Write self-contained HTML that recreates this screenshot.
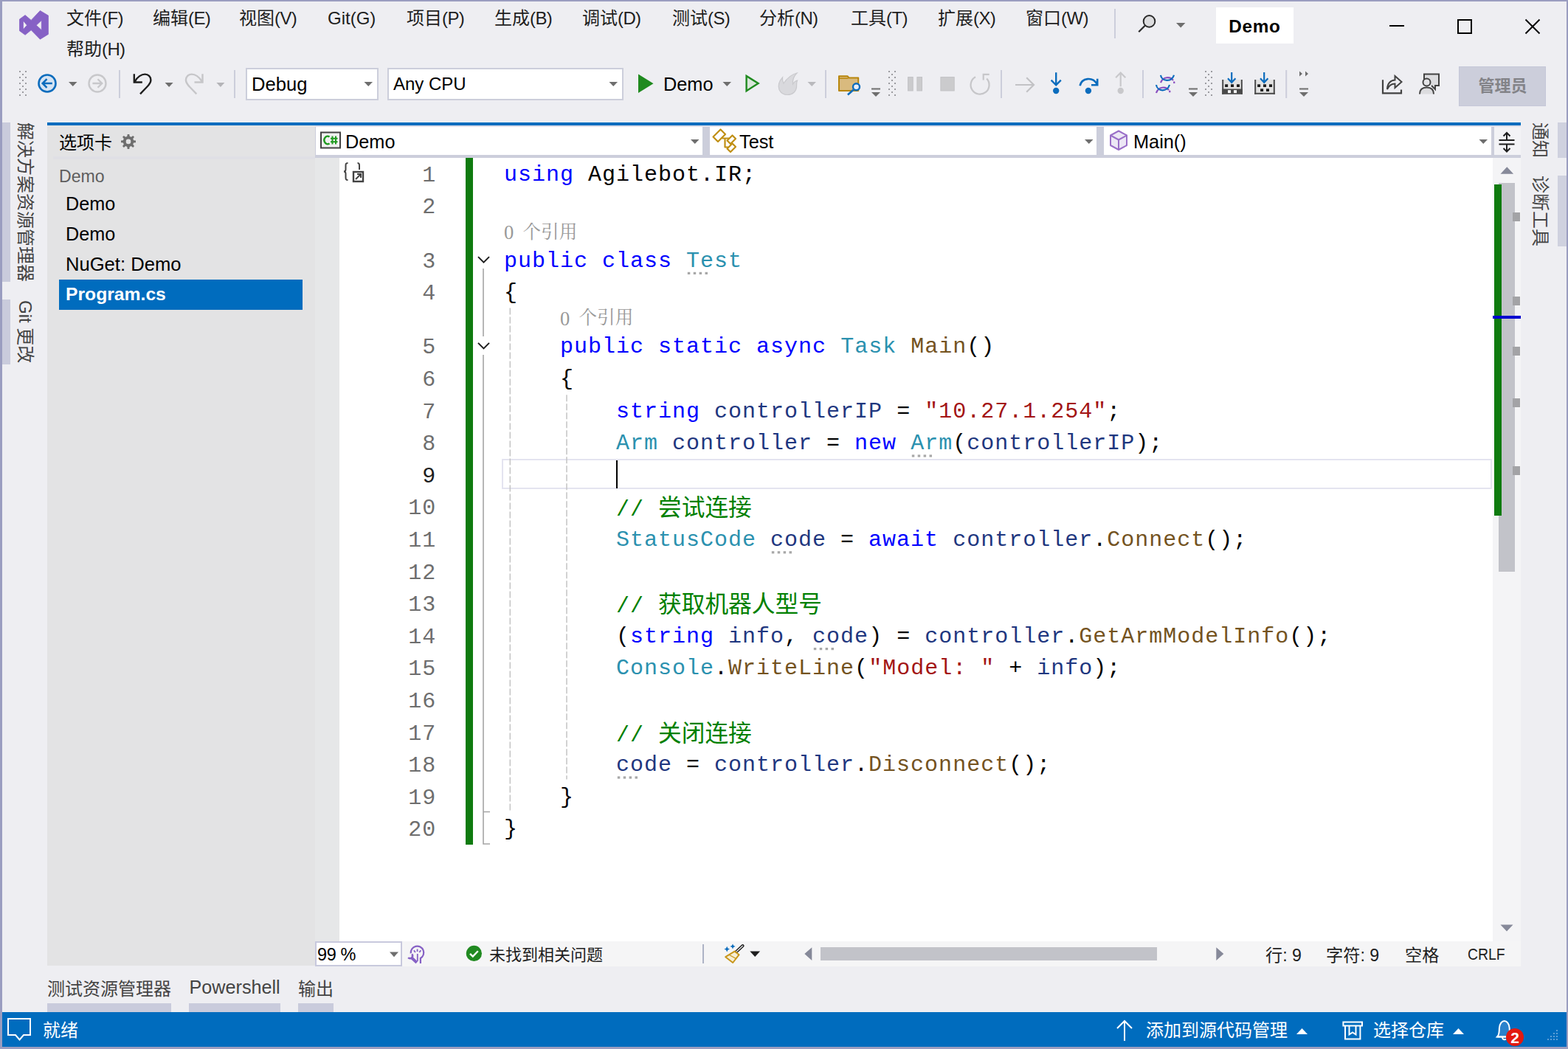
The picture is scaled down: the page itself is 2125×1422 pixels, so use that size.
<!DOCTYPE html>
<html lang="zh-CN">
<head>
<meta charset="utf-8">
<title>Demo - Microsoft Visual Studio</title>
<style>
*{box-sizing:border-box;margin:0;padding:0}
html,body{width:2125px;height:1422px;overflow:hidden}
body{background:#eeeef2;font-family:"Liberation Sans","Noto Sans CJK SC",sans-serif;color:#1e1e1e;position:relative}
div{position:absolute}
.t{white-space:nowrap;font-size:24px;line-height:28px;height:28px;color:#1e1e1e}
.menu{top:11px;letter-spacing:-0.6px}
svg{position:absolute;left:0;top:0;overflow:visible}
.ln{left:500px;width:91.2px;text-align:right;font-family:"Liberation Mono",monospace;font-size:30px;letter-spacing:1px;line-height:44px;height:44px;color:#6e6e6e;white-space:pre}
.cl{left:683px;font-family:"Liberation Mono",monospace;font-size:30px;letter-spacing:1px;line-height:44px;height:44px;white-space:pre;color:#000}
.k{color:#0000ff}.ty{color:#2b91af}.m{color:#74531f}.v{color:#1f377f}.s{color:#a31515}.c{color:#008000}
.cj{font-family:"Liberation Sans","Noto Sans CJK SC",sans-serif;letter-spacing:0}
.cc{font-size:31.7px}
.lens{height:30px;color:#999;white-space:pre}
.l0{position:absolute;left:0;top:0;font-family:"Liberation Serif",serif;font-size:26.5px;line-height:30px}
.lc{position:absolute;left:25.5px;top:-0.7px;font-size:24.6px;line-height:30px;font-family:"Liberation Serif","Noto Serif CJK SC",serif}
.vt{white-space:nowrap;font-size:24px;line-height:28px;height:28px;color:#444;transform-origin:0 0;transform:rotate(90deg)}
.sb{color:#fff}
.z{white-space:nowrap}
</style>
</head>
<body>
<!-- ===== title / menu bar ===== -->
<div id="menubar" style="left:0;top:0;width:2125px;height:88px">
<div class="t menu" style="left:90px"><span class="z" style="letter-spacing:0">文件</span>(F)</div>
<div class="t menu" style="left:207px"><span class="z" style="letter-spacing:0">编辑</span>(E)</div>
<div class="t menu" style="left:324px"><span class="z" style="letter-spacing:0">视图</span>(V)</div>
<div class="t menu" style="left:444px;letter-spacing:0">Git(G)</div>
<div class="t menu" style="left:551px"><span class="z" style="letter-spacing:0">项目</span>(P)</div>
<div class="t menu" style="left:670px"><span class="z" style="letter-spacing:0">生成</span>(B)</div>
<div class="t menu" style="left:789px"><span class="z" style="letter-spacing:0">调试</span>(D)</div>
<div class="t menu" style="left:911px"><span class="z" style="letter-spacing:0">测试</span>(S)</div>
<div class="t menu" style="left:1029px"><span class="z" style="letter-spacing:0">分析</span>(N)</div>
<div class="t menu" style="left:1153px"><span class="z" style="letter-spacing:0">工具</span>(T)</div>
<div class="t menu" style="left:1271px"><span class="z" style="letter-spacing:0">扩展</span>(X)</div>
<div class="t menu" style="left:1390px"><span class="z" style="letter-spacing:0">窗口</span>(W)</div>
<div class="t menu" style="left:90px;top:53px"><span class="z" style="letter-spacing:0">帮助</span>(H)</div>
<div style="left:1510px;top:12px;width:2px;height:40px;background:#cccedb"></div>
<div style="left:1648px;top:10px;width:105px;height:49px;background:#fff"></div>
<div class="t" style="left:1648px;top:21.5px;width:105px;text-align:center;font-weight:bold;font-size:24.3px;letter-spacing:0.7px;color:#000">Demo</div>
</div>
<!-- ===== toolbar ===== -->
<svg id="tbicons" width="2125" height="160" viewBox="0 0 2125 160">
<path fill="#8661c5" fill-rule="evenodd" stroke="#8661c5" stroke-width="0.8" stroke-linejoin="round" d="M54.4 14.5L65.4 21.1V46.4L54.4 53.2L42.2 40.7L34.1 47.3L26.5 41.800V26.100L34.1 20.600L42.2 27.400ZM31.4 28L36.6 34.200L31.4 40.100ZM56.3 27.600V40.800L49.2 34.200Z"/>
<circle cx="1557.5" cy="28.9" r="7.8" fill="#dcdcde" stroke="#2a2a2a" stroke-width="2"/><path d="M1552 34.5L1543.2 43.2" stroke="#2a2a2a" stroke-width="2.2" fill="none"/>
<path d="M1594 31h12.4l-6.2 6.4z" fill="#6e6e6e"/>
<g fill="none" stroke="#000" stroke-width="2"><path d="M1883 35h20"/><rect x="1976" y="27" width="18" height="18"/><path d="M2067.5 26.5l19 19M2086.5 26.5l-19 19"/></g>
<g fill="#9b9ba0"><rect x="26" y="96" width="2" height="2"/><rect x="34" y="96" width="2" height="2"/><rect x="30" y="100" width="2" height="2"/><rect x="26" y="104" width="2" height="2"/><rect x="34" y="104" width="2" height="2"/><rect x="30" y="108" width="2" height="2"/><rect x="26" y="112" width="2" height="2"/><rect x="34" y="112" width="2" height="2"/><rect x="30" y="116" width="2" height="2"/><rect x="26" y="120" width="2" height="2"/><rect x="34" y="120" width="2" height="2"/><rect x="30" y="124" width="2" height="2"/><rect x="26" y="128" width="2" height="2"/><rect x="34" y="128" width="2" height="2"/></g>
<circle cx="64" cy="113" r="11.5" fill="#d6e4f3" stroke="#0b6cbd" stroke-width="2.6"/><path d="M70.8 113H58M63.5 107.2L57.7 113L63.5 118.8" fill="none" stroke="#0b6cbd" stroke-width="2.5"/>
<path d="M93 111h11.5l-5.75 6z" fill="#6e6e6e"/>
<circle cx="132" cy="113" r="11.5" fill="#efeff2" stroke="#c8c8cb" stroke-width="2.4"/><path d="M125.4 113H138M132.5 107.2L138.3 113L132.5 118.8" fill="none" stroke="#c8c8cb" stroke-width="2.3"/>
<rect x="161" y="95" width="2" height="38" fill="#cccedb"/>
<path d="M181.8 100.2V111.5H192.8M182.8 110.6C186 104 192 100.6 196.5 100.6C201 100.6 204.4 104 204.4 108.5C204.4 112 202 115 199 118L190 127.3" fill="none" stroke="#1e1e1e" stroke-width="2.4"/>
<path d="M223.6 112h11l-5.5 6z" fill="#6e6e6e"/>
<path d="M274.5 100.2V111.5H263.5M273.5 110.6C270.3 104 264.3 100.6 259.8 100.6C255.3 100.6 251.9 104 251.9 108.5C251.9 112 254.3 115 257.3 118L266.3 127.3" fill="none" stroke="#c6c6c9" stroke-width="2.4"/>
<path d="M293.4 112h11l-5.5 6z" fill="#b4b4b8"/>
<rect x="317" y="95" width="2" height="38" fill="#cccedb"/>
<rect x="334" y="93" width="178" height="42" fill="#fff" stroke="#cccedb" stroke-width="2"/>
<path d="M493.5 111h11.5l-5.75 6z" fill="#6e6e6e"/>
<rect x="526" y="93" width="318" height="42" fill="#fff" stroke="#cccedb" stroke-width="2"/>
<path d="M825.5 111h11.5l-5.75 6z" fill="#6e6e6e"/>
<path d="M865 100.5V126L885.5 113.2Z" fill="#1f8a1f"/>
<path d="M979.5 111h11.5l-5.75 6z" fill="#6e6e6e"/>
<path d="M1011.6 103V123.2L1027.6 113.1Z" fill="#d9e6da" stroke="#1f8a1f" stroke-width="2.4" stroke-linejoin="miter"/>
<path d="M1080 99C1072 101 1066 107 1062 113C1060.5 110 1060 108 1060.5 105C1056 110 1054 116 1056 121.5C1058 126 1062 128.5 1067.5 128.5C1074 128.5 1079 124 1079.5 118C1079.8 115 1079 113 1080.5 109C1077 110 1075.5 112 1074.5 114C1074 109 1076 103 1080 99Z" fill="#d9d9dd" stroke="#c9c9cd" stroke-width="1.2"/>
<path d="M1094.5 111h11.5l-5.75 6z" fill="#b9b9bd"/>
<rect x="1118" y="95" width="2" height="38" fill="#cccedb"/>
<path d="M1137 103.2H1148.5L1150.5 105.5H1163.2V122.9H1137Z" fill="#d9ba7e" stroke="#b8860b" stroke-width="2" stroke-linejoin="round"/><path d="M1138 106.3H1149.5" stroke="#b8860b" stroke-width="1.4"/>
<circle cx="1160.5" cy="117.8" r="4.5" fill="#e8eef8" stroke="#0b6cbd" stroke-width="2.4"/><path d="M1156.6 121.8L1148.9 128.5" stroke="#0b6cbd" stroke-width="2.6" fill="none"/>
<rect x="1181" y="119.5" width="12" height="2" fill="#6e6e6e"/><path d="M1181 125h12l-6.0 6z" fill="#6e6e6e"/>
<g fill="#9b9ba0"><rect x="1204" y="96" width="2" height="2"/><rect x="1212" y="96" width="2" height="2"/><rect x="1208" y="100" width="2" height="2"/><rect x="1204" y="104" width="2" height="2"/><rect x="1212" y="104" width="2" height="2"/><rect x="1208" y="108" width="2" height="2"/><rect x="1204" y="112" width="2" height="2"/><rect x="1212" y="112" width="2" height="2"/><rect x="1208" y="116" width="2" height="2"/><rect x="1204" y="120" width="2" height="2"/><rect x="1212" y="120" width="2" height="2"/><rect x="1208" y="124" width="2" height="2"/><rect x="1204" y="128" width="2" height="2"/><rect x="1212" y="128" width="2" height="2"/></g>
<g fill="#cbcbcd" stroke="#c2c2c5" stroke-width="1"><rect x="1230.6" y="104.6" width="6.6" height="18.4"/><rect x="1242.9" y="104.6" width="6.6" height="18.4"/><rect x="1274.9" y="104.6" width="18.3" height="18.4"/></g>
<path d="M1322 104.2A12.5 12.5 0 1 0 1337.2 106.600M1332.7 108.400V100.800H1340.7" fill="none" stroke="#c6c6c9" stroke-width="2.2"/>
<rect x="1356" y="95" width="2" height="38" fill="#cccedb"/>
<path d="M1376 115H1400.5M1391.2 105.200L1401 115L1391.2 124.8" fill="none" stroke="#c2c2c5" stroke-width="2.2"/>
<path d="M1431.2 98.300V115M1424.6 108.600L1431.2 115.300L1437.8 108.6" fill="none" stroke="#0b6cbd" stroke-width="2.4"/><circle cx="1431.2" cy="123" r="4.2" fill="#0b6cbd"/>
<path d="M1463.6 116.200C1466 105.5 1480.5 103.5 1486.6 113.800M1487.2 106.800V115.200H1479" fill="none" stroke="#0b6cbd" stroke-width="2.6"/><circle cx="1474.9" cy="123" r="4.2" fill="#0b6cbd"/>
<path d="M1518.7 117.300V99M1512.1 105.300L1518.7 98.600L1525.3 105.3" fill="none" stroke="#c8c8cb" stroke-width="2.2"/><circle cx="1518.7" cy="123" r="4.2" fill="#c8c8cb"/>
<rect x="1548" y="95" width="2" height="38" fill="#cccedb"/>
<g fill="none" stroke-width="2.2"><path d="M1573 112.200C1576 103.5 1586 103.5 1590 109" stroke="#8a4fc0"/><path d="M1573 101.800C1574 110.5 1588 112 1591 101.8" stroke="#0b6cbd"/><path d="M1567 126C1570 117 1580 117 1584 122" stroke="#8a4fc0"/><path d="M1567 115C1568 124 1582 125.5 1585 115" stroke="#0b6cbd"/><path d="M1591 110.5L1591.5 113M1585 122.800L1585.5 125.3" stroke="#8a4fc0"/></g>
<rect x="1611" y="119.5" width="12" height="2" fill="#6e6e6e"/><path d="M1611 125h12l-6.0 6z" fill="#6e6e6e"/>
<g fill="#9b9ba0"><rect x="1633" y="96" width="2" height="2"/><rect x="1641" y="96" width="2" height="2"/><rect x="1637" y="100" width="2" height="2"/><rect x="1633" y="104" width="2" height="2"/><rect x="1641" y="104" width="2" height="2"/><rect x="1637" y="108" width="2" height="2"/><rect x="1633" y="112" width="2" height="2"/><rect x="1641" y="112" width="2" height="2"/><rect x="1637" y="116" width="2" height="2"/><rect x="1633" y="120" width="2" height="2"/><rect x="1641" y="120" width="2" height="2"/><rect x="1637" y="124" width="2" height="2"/><rect x="1633" y="128" width="2" height="2"/><rect x="1641" y="128" width="2" height="2"/></g>
<rect x="1657.2" y="108" width="25.6" height="19" fill="#e2e2e2"/><rect x="1656.2" y="120.5" width="27.6" height="7.3" fill="#4a4a4a"/><g fill="#fff"><rect x="1664.0" y="122.2" width="4" height="3.9"/><rect x="1672.0" y="122.2" width="4" height="3.9"/></g><rect x="1656.2" y="108" width="2" height="19.8" fill="#4a4a4a"/><rect x="1681.8" y="108" width="2" height="19.8" fill="#4a4a4a"/><g fill="#1e1e1e"><rect x="1660.1000000000001" y="114.3" width="4" height="3.7"/><rect x="1668.0" y="114.3" width="4" height="3.7"/><rect x="1676.0" y="114.3" width="4" height="3.7"/></g><path d="M1669.2 97.900V111.5M1664.0 106.300L1669.2 111.800L1674.4 106.3" fill="none" stroke="#0b6cbd" stroke-width="2.2"/>
<rect x="1701.2" y="108" width="25.6" height="19" fill="#e2e2e2"/><rect x="1700.2" y="125.8" width="27.6" height="2" fill="#4a4a4a"/><g fill="#1e1e1e"><rect x="1708.1000000000001" y="120.3" width="4" height="3.7"/><rect x="1716.0" y="120.3" width="4" height="3.7"/></g><rect x="1700.2" y="108" width="2" height="19.8" fill="#4a4a4a"/><rect x="1725.8" y="108" width="2" height="19.8" fill="#4a4a4a"/><g fill="#1e1e1e"><rect x="1704.1000000000001" y="114.3" width="4" height="3.7"/><rect x="1712.0" y="114.3" width="4" height="3.7"/><rect x="1720.0" y="114.3" width="4" height="3.7"/></g><path d="M1713.2 97.900V111.5M1708.0 106.300L1713.2 111.800L1718.4 106.3" fill="none" stroke="#0b6cbd" stroke-width="2.2"/>
<rect x="1742.2" y="95" width="2" height="38" fill="#cccedb"/>
<path d="M1761 96.5L1765 100L1761 103.5ZM1769 96.5L1773 100L1769 103.5Z" fill="#6e6e6e"/>
<rect x="1761" y="119.5" width="12" height="2" fill="#6e6e6e"/><path d="M1761 125h12l-6.0 6z" fill="#6e6e6e"/>
<path d="M1874 108.300V126.400H1899V121.5" fill="none" stroke="#424242" stroke-width="2.2"/><path d="M1880 121C1880 113 1885 108.5 1890.5 108.5V103L1899.5 111L1890.5 119V113.5C1886 113.5 1882.5 115.5 1880 121Z" fill="#eeeef2" stroke="#424242" stroke-width="2" stroke-linejoin="miter"/>
<path d="M1930 110V100.5H1950V116H1945V121L1940 116" fill="#dcdcdf" stroke="#424242" stroke-width="2"/><circle cx="1933.5" cy="111.5" r="5" fill="#e4e4e7" stroke="#424242" stroke-width="2"/><path d="M1924 127.5C1924 121 1928 118.5 1933.5 118.5C1939 118.5 1943 121 1943 127.5" fill="#dcdcdf" stroke="#424242" stroke-width="2"/>
<rect x="1977.5" y="90.5" width="117" height="53" fill="#cccedb" stroke="#c5c7d8" stroke-width="1"/>
</svg>
<div class="t" style="left:341px;top:100px;font-size:25.6px;color:#000">Debug</div>
<div class="t" style="left:533px;top:100px;color:#000">Any CPU</div>
<div class="t" style="left:899px;top:100px;font-size:25.3px;color:#000">Demo</div>
<div class="t" style="left:1978px;top:103px;width:117px;text-align:center;font-weight:bold;font-size:22px;color:#838388"><span class="z">管理员</span></div>
<!-- ===== left strip + vertical tab panel ===== -->
<div style="left:3px;top:166px;width:11px;height:216px;background:#c9cbdc"></div>
<div style="left:3px;top:406px;width:11px;height:88px;background:#c9cbdc"></div>
<div class="vt" style="left:48px;top:166px"><span class="z">解决方案资源管理器</span></div>
<div class="vt" style="left:48px;top:407px">Git <span class="z">更改</span></div>
<div style="left:64px;top:166px;width:1997px;height:4px;background:#006cbe"></div>
<div id="tabs" style="left:64px;top:170px;width:363px;height:1139px;background:#e3e3e4">
<div class="t" style="left:16px;top:10px;color:#000"><span class="z">选项卡</span></div>
<div style="left:8px;top:42px;width:355px;height:4px;background:#dfdfe5"></div>
<div class="t" style="left:16px;top:55px;font-size:23.1px;color:#5e5e5e">Demo</div>
<div class="t" style="left:25px;top:92px;font-size:25.2px;color:#000">Demo</div>
<div class="t" style="left:25px;top:133px;font-size:25.2px;color:#000">Demo</div>
<div class="t" style="left:25px;top:174px;font-size:25.6px;color:#000">NuGet: Demo</div>
<div style="left:16px;top:209px;width:330px;height:41px;background:#006cbe"></div>
<div class="t" style="left:25px;top:215px;font-size:24.7px;font-weight:bold;color:#fff">Program.cs</div>
</div>
<svg width="2125" height="260" viewBox="0 0 2125 260">
<path fill="#6e6e6e" fill-rule="evenodd" d="M172.3 184.8L172.7 181.9L175.3 181.9L175.7 184.8L177.8 185.7L180.2 183.9L182.0 185.7L180.2 188.1L181.1 190.2L184.0 190.6L184.0 193.2L181.1 193.6L180.2 195.7L182.0 198.1L180.2 199.9L177.8 198.1L175.7 199.0L175.3 201.9L172.7 201.9L172.3 199.0L170.2 198.1L167.8 199.9L166.0 198.1L167.8 195.7L166.9 193.6L164.0 193.2L164.0 190.6L166.9 190.2L167.8 188.1L166.0 185.7L167.8 183.9L170.2 185.7ZM170.7 191.9a3.3 3.3 0 1 0 6.6 0a3.3 3.3 0 1 0 -6.6 0Z"/>
</svg>
<!-- ===== editor ===== -->
<div style="left:427px;top:170px;width:1634px;height:44px;background:#cccedb"></div>
<div style="left:427px;top:170px;width:1634px;height:2px;background:#dddeea"></div>
<div style="left:428px;top:172px;width:524px;height:38px;background:#fff"></div>
<div style="left:962px;top:172px;width:524px;height:38px;background:#fff"></div>
<div style="left:1496px;top:172px;width:525px;height:38px;background:#fff"></div>
<div style="left:2025px;top:172px;width:36px;height:38px;background:#f3f3f6"></div>
<div class="t" style="left:468px;top:178px;font-size:25.3px;color:#000">Demo</div>
<div class="t" style="left:1002px;top:178px;font-size:25.3px;color:#000">Test</div>
<div class="t" style="left:1536px;top:178px;font-size:25.3px;color:#000">Main()</div>
<div style="left:427px;top:214px;width:33px;height:1062px;background:#e6e7e8"></div>
<div style="left:460px;top:214px;width:1563px;height:1062px;background:#fff"></div>
<div style="left:631px;top:214px;width:10px;height:931px;background:#0f7b0f"></div>
<div style="left:680px;top:622px;width:1342px;height:41px;border:2px solid #e4e4f0;background:#fff"></div>
<div style="left:835px;top:624px;width:2px;height:38px;background:#000"></div>
<div class="ln" style="top:215.7px">1</div>
<div class="cl" style="top:214.8px"><span class="k">using</span> Agilebot.IR;</div>
<div class="ln" style="top:259.3px">2</div>
<div class="ln" style="top:332.5px">3</div>
<div class="cl" style="top:331.6px"><span class="k">public</span> <span class="k">class</span> <span class="ty">Test</span></div>
<div class="ln" style="top:376.1px">4</div>
<div class="cl" style="top:375.2px">{</div>
<div class="ln" style="top:449.3px">5</div>
<div class="cl" style="top:448.4px">    <span class="k">public</span> <span class="k">static</span> <span class="k">async</span> <span class="ty">Task</span> <span class="m">Main</span>()</div>
<div class="ln" style="top:492.9px">6</div>
<div class="cl" style="top:492.0px">    {</div>
<div class="ln" style="top:536.5px">7</div>
<div class="cl" style="top:535.6px">        <span class="k">string</span> <span class="v">controllerIP</span> = <span class="s">"10.27.1.254"</span>;</div>
<div class="ln" style="top:580.1px">8</div>
<div class="cl" style="top:579.2px">        <span class="ty">Arm</span> <span class="v">controller</span> = <span class="k">new</span> <span class="ty">Arm</span>(<span class="v">controllerIP</span>);</div>
<div class="ln" style="top:623.7px;color:#1e1e1e">9</div>
<div class="ln" style="top:667.3px">10</div>
<div class="cl" style="top:666.4px">        <span class="c">// </span><span class="c cj cc"><span class="z">尝试连接</span></span></div>
<div class="ln" style="top:710.9px">11</div>
<div class="cl" style="top:710.0px">        <span class="ty">StatusCode</span> <span class="v">code</span> = <span class="k">await</span> <span class="v">controller</span>.<span class="m">Connect</span>();</div>
<div class="ln" style="top:754.5px">12</div>
<div class="ln" style="top:798.1px">13</div>
<div class="cl" style="top:797.2px">        <span class="c">// </span><span class="c cj cc"><span class="z">获取机器人型号</span></span></div>
<div class="ln" style="top:841.7px">14</div>
<div class="cl" style="top:840.8px">        (<span class="k">string</span> <span class="v">info</span>, <span class="v">code</span>) = <span class="v">controller</span>.<span class="m">GetArmModelInfo</span>();</div>
<div class="ln" style="top:885.3px">15</div>
<div class="cl" style="top:884.4px">        <span class="ty">Console</span>.<span class="m">WriteLine</span>(<span class="s">"Model: "</span> + <span class="v">info</span>);</div>
<div class="ln" style="top:928.9px">16</div>
<div class="ln" style="top:972.5px">17</div>
<div class="cl" style="top:971.6px">        <span class="c">// </span><span class="c cj cc"><span class="z">关闭连接</span></span></div>
<div class="ln" style="top:1016.1px">18</div>
<div class="cl" style="top:1015.2px">        <span class="v">code</span> = <span class="v">controller</span>.<span class="m">Disconnect</span>();</div>
<div class="ln" style="top:1059.7px">19</div>
<div class="cl" style="top:1058.8px">    }</div>
<div class="ln" style="top:1103.3px">20</div>
<div class="cl" style="top:1102.4px">}</div>
<div class="lens" style="left:683px;top:300.2px;width:110px"><span class="l0">0</span><span class="cj lc"><span class="z">个引用</span></span></div>
<div class="lens" style="left:759px;top:417.0px;width:110px"><span class="l0">0</span><span class="cj lc"><span class="z">个引用</span></span></div>
<svg id="edsvg" width="2125" height="1422" viewBox="0 0 2125 1422">
<path d="M648 348.1l7.5 7.5l7.5-7.5" fill="none" stroke="#1e1e1e" stroke-width="2"/>
<path d="M648 464.9l7.5 7.5l7.5-7.5" fill="none" stroke="#1e1e1e" stroke-width="2"/>
<path d="M655 364.1V455.9M655 480.9V1144H664M655 1100.5H664" fill="none" stroke="#a5a5a5" stroke-width="1.6"/>
<path d="M691.3 417.5V1101.1M768 535.3V1056.5" fill="none" stroke="#c4c4c4" stroke-width="1.5" stroke-dasharray="9 3"/>
<g fill="#a8a8a8"><rect x="931.8" y="368.8" width="3.5" height="3.2"/><rect x="939.7" y="368.8" width="3.5" height="3.2"/><rect x="947.6" y="368.8" width="3.5" height="3.2"/><rect x="955.5" y="368.8" width="3.5" height="3.2"/><rect x="1235.8" y="616.4" width="3.5" height="3.2"/><rect x="1243.7" y="616.4" width="3.5" height="3.2"/><rect x="1251.6" y="616.4" width="3.5" height="3.2"/><rect x="1259.5" y="616.4" width="3.5" height="3.2"/><rect x="1045.8" y="747.2" width="3.5" height="3.2"/><rect x="1053.7" y="747.2" width="3.5" height="3.2"/><rect x="1061.6" y="747.2" width="3.5" height="3.2"/><rect x="1069.5" y="747.2" width="3.5" height="3.2"/><rect x="1102.8" y="878.0" width="3.5" height="3.2"/><rect x="1110.7" y="878.0" width="3.5" height="3.2"/><rect x="1118.6" y="878.0" width="3.5" height="3.2"/><rect x="1126.5" y="878.0" width="3.5" height="3.2"/><rect x="836.8" y="1052.4" width="3.5" height="3.2"/><rect x="844.7" y="1052.4" width="3.5" height="3.2"/><rect x="852.6" y="1052.4" width="3.5" height="3.2"/><rect x="860.5" y="1052.4" width="3.5" height="3.2"/></g>
<rect x="435" y="179.5" width="26" height="21" fill="#f0f0f0" stroke="#424242" stroke-width="2"/>
<path d="M446.5 185.5A4.6 5.3 0 1 0 446.5 194.5" fill="none" stroke="#1e9a1e" stroke-width="2.4"/><path d="M450.5 184.5V195.5M455 184.5V195.5M448 187.800H457.5M448 192.200H457.5" fill="none" stroke="#1e9a1e" stroke-width="2"/>
<g fill="none" stroke="#c08f13" stroke-width="2.2" stroke-linejoin="round"><path d="M976.5 175.5L983 182L973 192L966.5 185.5Z"/><path d="M992.5 183.5L997 188L990 195L985.5 190.5Z"/><path d="M992.5 194.5L997 199L990 206L985.5 201.5Z"/><path d="M978.5 187.5H988M982.5 187.5V199.5H987"/></g>
<g fill="#ece7f5" stroke="#9a6fc8" stroke-width="2" stroke-linejoin="round"><path d="M1516 177.5L1527 183.5V197L1516 203L1505 197V183.5Z"/><path d="M1505 183.5L1516 189.5L1527 183.5M1516 189.5V203" fill="none"/></g>
<path d="M936 189h11.5l-5.75 6z" fill="#6e6e6e"/>
<path d="M1470 189h11.5l-5.75 6z" fill="#6e6e6e"/>
<path d="M2004.5 189h11.5l-5.75 6z" fill="#6e6e6e"/>
<path d="M2031.5 190h21M2031.5 195.5h21M2042 190V180M2037.5 184.5L2042 180L2046.5 184.5M2042 195.5V205.5M2037.5 201L2042 205.5L2046.5 201" fill="none" stroke="#1e1e1e" stroke-width="2"/>
<g fill="none" stroke="#424242" stroke-width="2"><path d="M471.5 221C468.5 221 468.5 222.5 468.5 225V229.5C468.5 231.5 467.5 232.5 466 232.5C467.5 232.5 468.5 233.5 468.5 235.5V240C468.5 242.5 468.5 244 471.5 244"/><path d="M484.5 221C487 221 487 222.5 487 225V230"/><rect x="479" y="233" width="13" height="13" stroke-width="2.4"/><path d="M482 243L489 236M484 236H489V241" stroke-width="2"/></g>
</svg>
<!-- ===== editor scrollbar + right strip ===== -->
<div style="left:2023px;top:214px;width:38px;height:1062px;background:#f4f4f6"></div>
<div style="left:2031px;top:248px;width:22px;height:527px;background:#c2c3c9"></div>
<div style="left:2025px;top:250px;width:10px;height:449px;background:#0f7b0f"></div>
<div style="left:2050px;top:288px;width:10px;height:12px;background:#a3a3a6"></div>
<div style="left:2050px;top:402px;width:10px;height:12px;background:#a3a3a6"></div>
<div style="left:2050px;top:470px;width:10px;height:12px;background:#a3a3a6"></div>
<div style="left:2050px;top:540px;width:10px;height:12px;background:#a3a3a6"></div>
<div style="left:2050px;top:632px;width:10px;height:12px;background:#a3a3a6"></div>
<div style="left:2023px;top:428px;width:38px;height:4px;background:#0000d0"></div>
<svg width="2125" height="1422" viewBox="0 0 2125 1422"><path d="M2033.5 235.700h17.600l-8.8-9.400zM2033.5 1253.500h17l-8.500 9z" fill="#868999"/></svg>
<div style="left:2111px;top:166px;width:12px;height:48px;background:#cfd1df"></div>
<div style="left:2111px;top:238px;width:12px;height:96px;background:#cfd1df"></div>
<div class="vt" style="left:2101px;top:166px"><span class="z">通知</span></div>
<div class="vt" style="left:2101px;top:238px"><span class="z">诊断工具</span></div>
<!-- ===== editor bottom bar ===== -->
<div style="left:427px;top:1276px;width:1634px;height:34px;background:#f5f5f6"></div>
<div style="left:427px;top:1276px;width:118px;height:34px;background:#fff;border:2px solid #c8c9dd"></div>
<div class="t" style="left:430px;top:1280px;font-size:23.5px;letter-spacing:-0.4px;color:#000">99 %</div>
<div class="t" style="left:663px;top:1281px;font-size:22px;color:#1e1e1e"><span class="z">未找到相关问题</span></div>
<div style="left:952px;top:1280px;width:2px;height:26px;background:#adb3c6"></div>
<div style="left:1112px;top:1284px;width:456px;height:18px;background:#c2c3c9"></div>
<div class="t" style="left:1715px;top:1281px;font-size:23.2px"><span class="z">行</span>: 9</div>
<div class="t" style="left:1797px;top:1281px;font-size:23.2px"><span class="z">字符</span>: 9</div>
<div class="t" style="left:1904px;top:1281px;font-size:23.2px"><span class="z">空格</span></div>
<div class="t" style="left:1989px;top:1280.3px;font-size:22.6px;transform:scaleX(.86);transform-origin:0 0">CRLF</div>
<!-- ===== bottom tool tabs ===== -->
<div class="t" style="left:64px;top:1326.5px;color:#444"><span class="z">测试资源管理器</span></div>
<div class="t" style="left:256.5px;top:1323.5px;font-size:25.2px;color:#444">Powershell</div>
<div class="t" style="left:404px;top:1326.5px;color:#444"><span class="z">输出</span></div>
<div style="left:64px;top:1360px;width:168px;height:12px;background:#c9cbdc"></div>
<div style="left:256px;top:1360px;width:124px;height:12px;background:#c9cbdc"></div>
<div style="left:404px;top:1360px;width:48px;height:12px;background:#c9cbdc"></div>
<!-- ===== status bar ===== -->
<div style="left:0;top:1372px;width:2125px;height:50px;background:#006cbe"></div>
<div class="t sb" style="left:58px;top:1383px"><span class="z">就绪</span></div>
<div class="t sb" style="left:1553px;top:1383px"><span class="z">添加到源代码管理</span></div>
<div class="t sb" style="left:1861px;top:1383px"><span class="z">选择仓库</span></div>
<svg width="2125" height="1422" viewBox="0 0 2125 1422">
<!-- zoom combo arrow -->
<path d="M528 1290.600h12l-6 6.600z" fill="#6e6e6e"/>
<!-- intellicode-ish icon -->
<g fill="none" stroke="#8661c5" stroke-width="2.2"><path d="M556.7 1292.300A8.8 8.8 0 1 1 569.9 1299V1306"/><path d="M565.6 1286.500V1290M560.9 1288.200L562.9 1291M570.3 1288.200L568.3 1291M565.8 1293V1303" stroke-width="1.8"/><path d="M557.5 1298L564.8 1304.8" stroke-width="3.8"/><path d="M558.2 1293.400A3.3 3.3 0 1 1 553.2 1298.2" stroke-width="2.6"/></g>
<!-- ok circle -->
<circle cx="642.4" cy="1292.4" r="10.6" fill="#218a21"/><path d="M637 1292.800l3.8 3.800l7-7.400" fill="none" stroke="#fff" stroke-width="2.4"/>
<!-- brush icon -->
<path d="M1006.6 1282L997 1291" stroke="#1e1e1e" stroke-width="4" stroke-linecap="round" fill="none"/><path d="M1006.4 1282.200L998 1290" stroke="#f5f5f6" stroke-width="1.2" stroke-linecap="round" fill="none"/><path d="M995.6 1289.600L1001.6 1294.200L993.2 1305L983.2 1297.200Z" fill="#f6eed6" stroke="#c8961a" stroke-width="2" stroke-linejoin="round"/><path d="M988.5 1294.500L997.5 1299.5" stroke="#c8961a" stroke-width="1.4"/><path d="M985.2 1282.800l1.200 2.600l2.600 1.200l-2.600 1.200l-1.200 2.600l-1.200-2.600l-2.600-1.200l2.600-1.200zM993 1279.400l1.100 2.400l2.400 1.100l-2.400 1.100l-1.100 2.400l-1.100-2.400l-2.400-1.100l2.400-1.100z" fill="#0b6cbd"/>
<path d="M1016.3 1289.400h13.800l-6.900 7.600z" fill="#1e1e1e"/>
<!-- h scroll arrows -->
<path d="M1100.3 1284.200v17.700l-10-8.850zM1648.3 1284.200v17.700l10-8.850z" fill="#868999"/>
<!-- status bar icons -->
<g fill="none" stroke="#fff" stroke-width="2"><path d="M11 1381h30v22H32l-5.500 6.500L21 1403H11z"/><path d="M1524 1384V1411M1514 1394L1524 1384L1534 1394"/><path d="M1820.4 1385.400h25.600v5h-25.600zM1823 1390.400V1408.400h20.400V1390.400M1828.500 1391v11.500l4.500-3l4.500 3V1391"/><path d="M2029 1405.500C2032.5 1402 2031.5 1397 2032 1393C2032.6 1387.5 2035.5 1384 2038.8 1384C2042 1384 2045 1387.5 2045.6 1393C2046 1397 2045.5 1402 2048.5 1405.500Z" fill="#2b82cc"/><path d="M2028.500 1405.500H2042M2036 1406.500a3 3 0 0 0 5 2"/></g>
<path d="M1757 1402h15l-7.500-8zM1969 1402h15l-7.500-8z" fill="#fff"/>
<circle cx="2053" cy="1406" r="12" fill="#e21a11"/>
<g fill="#5c9fd6"><rect x="2109" y="1396" width="2" height="2"/><rect x="2105" y="1400" width="2" height="2"/><rect x="2109" y="1400" width="2" height="2"/><rect x="2101" y="1404" width="2" height="2"/><rect x="2105" y="1404" width="2" height="2"/><rect x="2109" y="1404" width="2" height="2"/><rect x="2097" y="1408" width="2" height="2"/><rect x="2101" y="1408" width="2" height="2"/><rect x="2105" y="1408" width="2" height="2"/><rect x="2109" y="1408" width="2" height="2"/></g>
</svg>
<div class="t" style="left:2043px;top:1392.500px;width:20px;text-align:center;font-size:21px;font-weight:bold;color:#fff">2</div>
<!-- window border -->
<div style="left:0;top:0;width:2125px;height:1422px;border:2px solid #9a9dc0;border-left-width:3px;border-right-width:2px;border-bottom-width:3px"></div>
</body>
</html>
